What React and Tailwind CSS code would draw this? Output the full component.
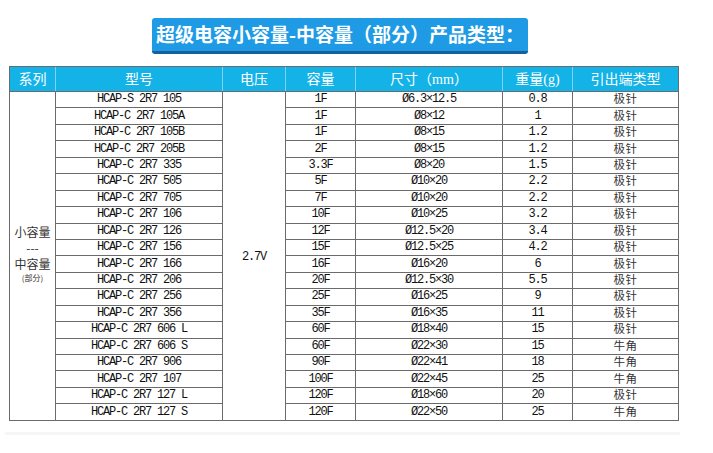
const ROWS = [
  ['HCAP-S 2R7 105', '1F', 'Ø6.3×12.5', '0.8', '极针'],
  ['HCAP-C 2R7 105A', '1F', 'Ø8×12', '1', '极针'],
  ['HCAP-C 2R7 105B', '1F', 'Ø8×15', '1.2', '极针'],
  ['HCAP-C 2R7 205B', '2F', 'Ø8×15', '1.2', '极针'],
  ['HCAP-C 2R7 335', '3.3F', 'Ø8×20', '1.5', '极针'],
  ['HCAP-C 2R7 505', '5F', 'Ø10×20', '2.2', '极针'],
  ['HCAP-C 2R7 705', '7F', 'Ø10×20', '2.2', '极针'],
  ['HCAP-C 2R7 106', '10F', 'Ø10×25', '3.2', '极针'],
  ['HCAP-C 2R7 126', '12F', 'Ø12.5×20', '3.4', '极针'],
  ['HCAP-C 2R7 156', '15F', 'Ø12.5×25', '4.2', '极针'],
  ['HCAP-C 2R7 166', '16F', 'Ø16×20', '6', '极针'],
  ['HCAP-C 2R7 206', '20F', 'Ø12.5×30', '5.5', '极针'],
  ['HCAP-C 2R7 256', '25F', 'Ø16×25', '9', '极针'],
  ['HCAP-C 2R7 356', '35F', 'Ø16×35', '11', '极针'],
  ['HCAP-C 2R7 606 L', '60F', 'Ø18×40', '15', '极针'],
  ['HCAP-C 2R7 606 S', '60F', 'Ø22×30', '15', '牛角'],
  ['HCAP-C 2R7 906', '90F', 'Ø22×41', '18', '牛角'],
  ['HCAP-C 2R7 107', '100F', 'Ø22×45', '25', '牛角'],
  ['HCAP-C 2R7 127 L', '120F', 'Ø18×60', '20', '极针'],
  ['HCAP-C 2R7 127 S', '120F', 'Ø22×50', '25', '牛角'],
];

const HEADERS = ['系列', '型号', '电压', '容量', '尺寸（mm）', '重量(g)', '引出端类型'];
const WIDTHS = [46, 167, 63, 70, 147, 70, 106];

const cell = 'border border-[#6b6b6b] p-0 text-center align-middle whitespace-pre';

export default function App() {
  return (
    <div className="h-[453px] w-[713px] overflow-hidden bg-white pt-[18px]">
      <div className="ml-[152px] flex h-[36px] w-[376px] items-center justify-center rounded-[3px] border-b-[3px] border-[#17609f] bg-[#1e9be4] font-['Noto_Sans_CJK_SC',sans-serif] text-[19px] font-bold text-white">
        超级电容小容量-中容量（部分）产品类型：
      </div>

      <table className="ml-[9px] mt-[12px] table-fixed border-collapse font-['Liberation_Mono','Noto_Sans_CJK_SC',monospace] text-[12px] tracking-[-1.2px] text-[#111]">
        <colgroup>
          {WIDTHS.map((w, i) => (
            <col key={i} style={{ width: w }} />
          ))}
        </colgroup>
        <thead>
          <tr className="h-[25px] bg-[#13b3e8]">
            {HEADERS.map((h, i) => (
              <th
                key={h}
                className={`border-y border-[#6b6b6b] p-0 text-center font-['Liberation_Serif','Noto_Sans_CJK_SC',serif] text-[14px] font-normal tracking-normal text-white ${
                  i === 0 ? 'border-l' : 'border-l border-l-[#7fd3f0]'
                } ${i === HEADERS.length - 1 ? 'border-r border-r-[#6b6b6b]' : ''}`}
              >
                {h}
              </th>
            ))}
          </tr>
        </thead>
        <tbody>
          {ROWS.map((r, i) => (
            <tr key={i} className="h-[16.45px] leading-[15px]">
              {i === 0 && (
                <td rowSpan={ROWS.length} className={`${cell} font-['Noto_Sans_CJK_SC',sans-serif] tracking-normal`}>
                  <div className="flex flex-col items-center pb-[4px] text-[12px] leading-[16px] text-[#333]">
                    <span>小容量</span>
                    <span>---</span>
                    <span>中容量</span>
                    <span className="text-[8px] leading-[12px]">(部分)</span>
                  </div>
                </td>
              )}
              <td className={cell}>{r[0]}</td>
              {i === 0 && (
                <td rowSpan={ROWS.length} className={`${cell} pt-[3px]`}>
                  2.7V
                </td>
              )}
              <td className={cell}>{r[1]}</td>
              <td className={cell}>{r[2]}</td>
              <td className={cell}>{r[3]}</td>
              <td className={`${cell} pb-[2px] font-['Noto_Sans_CJK_SC',sans-serif] text-[11.5px] leading-[13px] tracking-[0.5px] text-[#333]`}>
                {r[4]}
              </td>
            </tr>
          ))}
        </tbody>
      </table>

      <div className="ml-[5px] mt-[11px] h-[3px] w-[675px] bg-[#f6f6f6]" />
    </div>
  );
}
